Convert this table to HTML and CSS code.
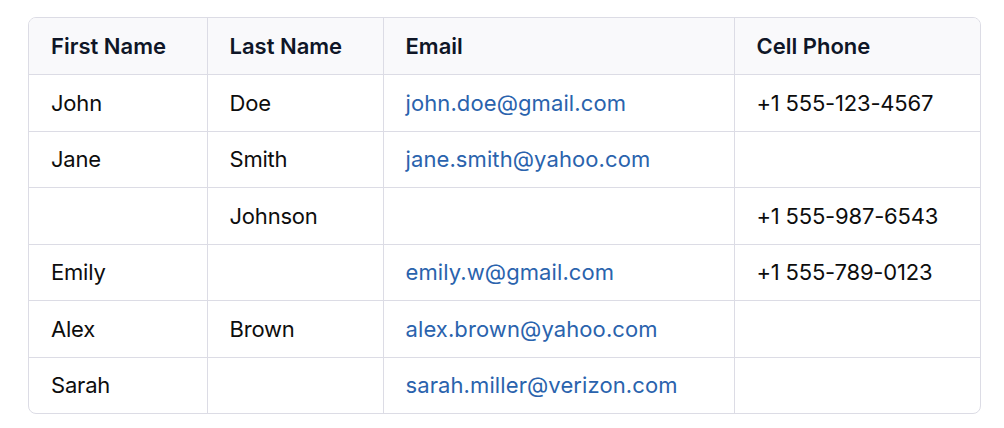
FILE: index.html
```html
<!DOCTYPE html>
<html>
<head>
<meta charset="utf-8">
<link rel="stylesheet" href="styles.css">
</head>
<body>
<div class="wrap">
<table class="tbl">
<colgroup>
<col class="c1"><col class="c2"><col class="c3"><col class="c4">
</colgroup>
<thead>
<tr><th>First Name</th><th>Last Name</th><th>Email</th><th>Cell Phone</th></tr>
</thead>
<tbody>
<tr><td>John</td><td>Doe</td><td><a href="#">john.doe@gmail.com</a></td><td>+1 555-123-4567</td></tr>
<tr><td>Jane</td><td>Smith</td><td><a href="#">jane.smith@yahoo.com</a></td><td></td></tr>
<tr><td></td><td>Johnson</td><td></td><td>+1 555-987-6543</td></tr>
<tr><td>Emily</td><td></td><td><a href="#">emily.w@gmail.com</a></td><td>+1 555-789-0123</td></tr>
<tr><td>Alex</td><td>Brown</td><td><a href="#">alex.brown@yahoo.com</a></td><td></td></tr>
<tr><td>Sarah</td><td></td><td><a href="#">sarah.miller@verizon.com</a></td><td></td></tr>
</tbody>
</table>
</div>
</body>
</html>
```
FILE: styles.css
```css
html, body { margin: 0; padding: 0; background: #fff; }
body { padding: 17px 0 0 28px; font-family: Inter, "Noto Sans", sans-serif; color: #0d0d0d; }
.wrap {
  width: 953px;
  box-sizing: border-box;
  border: 1px solid #dcdce5;
  border-radius: 8px;
  overflow: hidden;
}
.tbl { border-collapse: collapse; width: 100%; table-layout: fixed; }
.c1 { width: 178px; }
.c2 { width: 176px; }
.c3 { width: 351px; }
.c4 { width: auto; }
.tbl th, .tbl td {
  text-align: left;
  padding: 0 0 0 22px;
  font-size: 22px;
  letter-spacing: -0.2px;
  border-right: 1px solid #dcdce5;
  border-bottom: 1px solid #dcdce5;
  white-space: nowrap;
}
.tbl th:last-child, .tbl td:last-child { border-right: none; }
.tbl tbody tr:last-child td { border-bottom: none; }
.tbl th { height: 56px; background: #f9f9fb; font-weight: 600; color: #0f1627; letter-spacing: 0; }
.tbl td { height: 55.5px; font-weight: 400; }
.tbl a { color: #2a63ad; text-decoration: none; letter-spacing: 0.1px; }
```
